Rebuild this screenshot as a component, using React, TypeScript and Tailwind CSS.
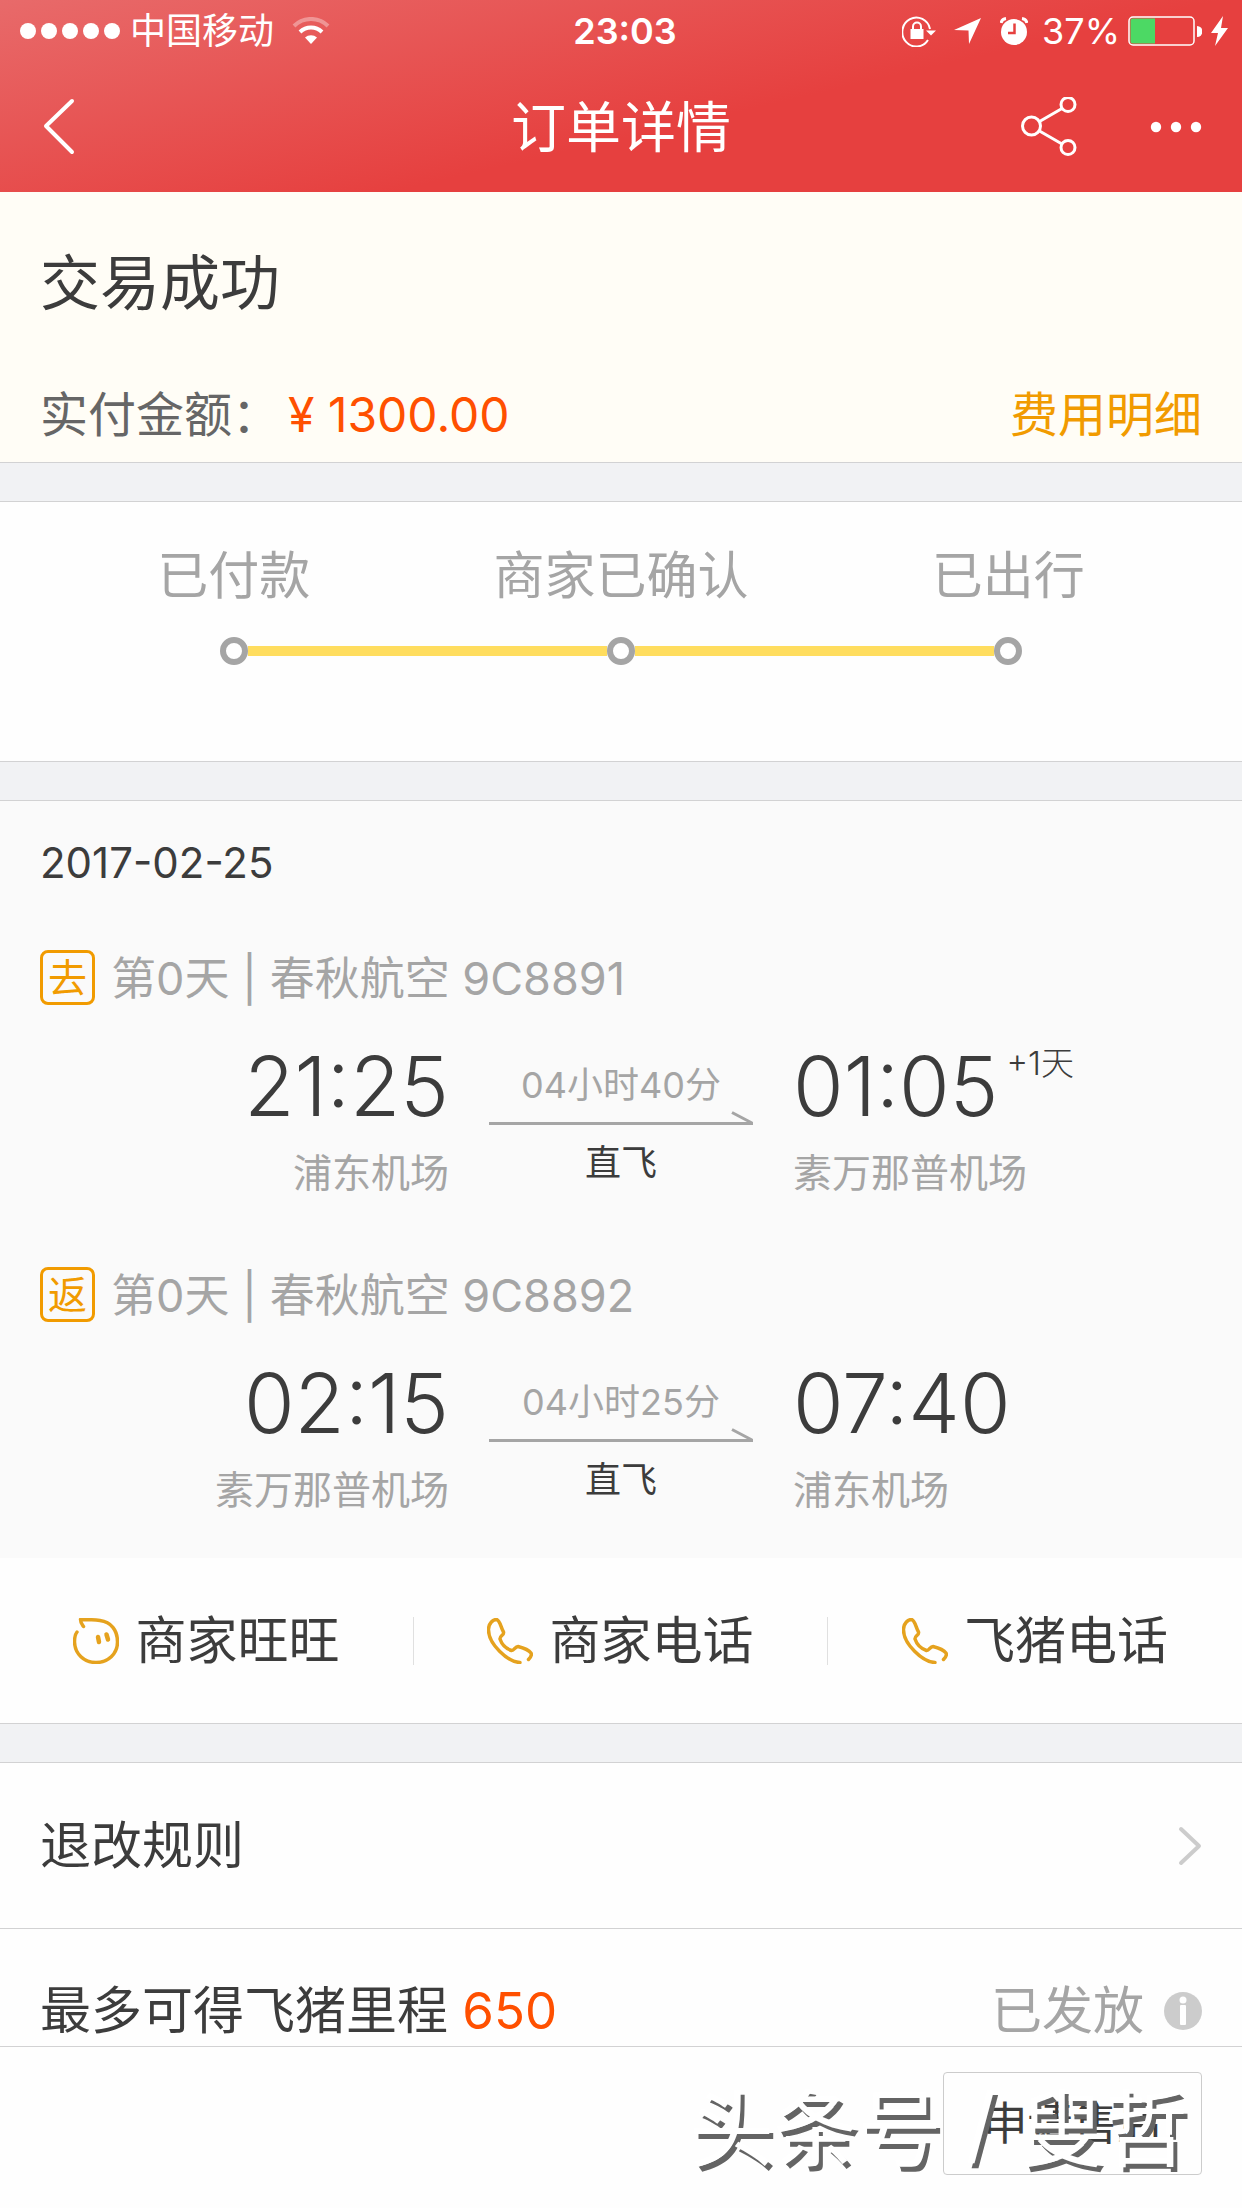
import React from "react";

//interfaces for the order data
interface Leg {
    id: number;
    tag: string;
    title: string;
    departTime: string;
    departAirport: string;
    duration: string;
    arriveTime: string;
    arriveAirport: string;
    extraDay?: string;
}

interface Contact {
    label: string;
    icon: "face" | "phone";
}

const steps = ["已付款", "商家已确认", "已出行"];

const legs: Leg[] = [
    {
        id: 1,
        tag: "去",
        title: "第0天 | 春秋航空 9C8891",
        departTime: "21:25",
        departAirport: "浦东机场",
        duration: "04小时40分",
        arriveTime: "01:05",
        arriveAirport: "素万那普机场",
        extraDay: "+1天",
    },
    {
        id: 2,
        tag: "返",
        title: "第0天 | 春秋航空 9C8892",
        departTime: "02:15",
        departAirport: "素万那普机场",
        duration: "04小时25分",
        arriveTime: "07:40",
        arriveAirport: "浦东机场",
    },
];

const contacts: Contact[] = [
    { label: "商家旺旺", icon: "face" },
    { label: "商家电话", icon: "phone" },
    { label: "飞猪电话", icon: "phone" },
];

function StatusBar() {
    return (
        <div className="relative flex items-center justify-between h-[62px] pl-5 pr-[14px] text-[36px] leading-[48px]">
            <div className="flex items-center">
                <div className="flex gap-[5px] mr-[10px]">
                    {[1, 2, 3, 4, 5].map((dot) => (
                        <span key={dot} className="w-4 h-4 rounded-full bg-white"></span>
                    ))}
                </div>
                <span>中国移动</span>
                <svg className="ml-[18px]" width="38" height="28" viewBox="0 0 38 28" fill="none" stroke="white">
                    <path d="M2 9 A24 24 0 0 1 36 9" strokeWidth="4" opacity="0.35" />
                    <path d="M8 15 A16 16 0 0 1 30 15" strokeWidth="4" />
                    <path d="M19 27 L13 20.5 A9 9 0 0 1 25 20.5 Z" fill="white" stroke="none" />
                </svg>
            </div>

            {/* clock stays in the middle of the bar */}
            <span className="absolute inset-x-0 text-center font-semibold pointer-events-none pl-2">23:03</span>

            <div className="flex items-center">
                <svg width="34" height="32" viewBox="0 0 34 32" fill="none" stroke="white">
                    <path d="M28 14 A14 14.5 0 1 0 26 25" strokeWidth="2" />
                    <path d="M24 15.5 H34 L29 20.5 Z" fill="white" stroke="none" />
                    <rect x="8.500" y="14" width="13" height="10" fill="white" stroke="none" />
                    <path d="M11 15 V11.500 a4 4 0 0 1 8 0 V15" strokeWidth="2" />
                </svg>
                <svg className="ml-[18px]" width="28" height="28" viewBox="0 0 28 28" fill="white">
                    <path d="M27 1 L15 27 L14.500 13.500 L0 13 Z" />
                </svg>
                <svg className="ml-[18px]" width="28" height="28" viewBox="0 0 28 28" fill="none" stroke="white">
                    <circle cx="14" cy="15" r="13" fill="white" stroke="none" />
                    <path d="M1 6 A6 6 0 0 1 6 1.500 M27 6 A6 6 0 0 0 22 1.500" strokeWidth="3" />
                    <path d="M14.500 6.500 V16 H8" stroke="#e6403f" strokeWidth="2.500" />
                </svg>
                <span className="ml-[14px]">37%</span>
                <svg className="ml-2" width="74" height="30" viewBox="0 0 74 30">
                    <rect x="1" y="1" width="65" height="28" rx="4" fill="none" stroke="white" strokeWidth="1.500" />
                    <path d="M2.500 4.500 a2 2 0 0 1 2 -2 H27 V27.500 H4.500 a2 2 0 0 1 -2 -2 Z" fill="#4cd964" />
                    <path d="M69 10 a5 5 0 0 1 0 11 Z" fill="white" />
                </svg>
                <svg className="ml-[9px]" width="17" height="30" viewBox="0 0 17 30" fill="white">
                    <path d="M12 0 L0 17 H7 L4 30 L17 12 H10 Z" />
                </svg>
            </div>
        </div>
    );
}

function NavBar() {
    return (
        <div className="flex items-center justify-between h-[130px] px-10">
            <div className="flex-1 flex">
                <button aria-label="返回">
                    <svg width="38" height="58" viewBox="0 0 38 58" fill="none" stroke="white" strokeWidth="4" strokeLinecap="round" strokeLinejoin="round">
                        <path d="M32 3 L6 28 L32 54" />
                    </svg>
                </button>
            </div>
            <h1 className="text-[55px] leading-[72px]">订单详情</h1>
            <div className="flex-1 flex justify-end items-center gap-[73px]">
                <button aria-label="分享">
                    <svg width="56" height="60" viewBox="0 0 56 60" fill="none" stroke="white" strokeWidth="3">
                        <circle cx="10.500" cy="29" r="9" />
                        <circle cx="47" cy="7.500" r="7" />
                        <circle cx="47" cy="50.500" r="7" />
                        <path d="M18.500 24.500 L41 11.500 M18.500 34 L41 47" />
                    </svg>
                </button>
                <button aria-label="更多">
                    <svg width="52" height="12" viewBox="0 0 52 12" fill="white">
                        <circle cx="6" cy="6" r="5.200" />
                        <circle cx="26" cy="6" r="5.200" />
                        <circle cx="46" cy="6" r="5.200" />
                    </svg>
                </button>
            </div>
        </div>
    );
}

function Divider() {
    return <div className="h-10 bg-[#f1f2f4] border-y border-[#d2d2d3]"></div>;
}

function FlightLeg({ leg }: { leg: Leg }) {
    return (
        <div>
            <div className="flex items-center gap-4 text-[45px] leading-[60px] text-[#a5a5a5]">
                <span className="flex items-center justify-center w-[55px] h-[55px] border-3 border-[#f19b00] rounded-lg text-[39px] leading-[48px] text-[#f19b00]">
                    {leg.tag}
                </span>
                <span className="pt-[3px]">{leg.title}</span>
            </div>
            <div className="grid grid-cols-[1fr_264px_1fr] gap-10 mt-9">
                <div className="text-right">
                    <p className="text-[82px] leading-[84px] font-light text-[#3c3c3c]">{leg.departTime}</p>
                    <p className="mt-5 text-[39px] leading-[48px] text-[#a5a5a5]">{leg.departAirport}</p>
                </div>
                <div className="pt-4 text-center text-[36px] leading-[48px]">
                    <p className="text-[#a5a5a5]">{leg.duration}</p>
                    <svg className="block w-full mt-[2px]" height="14" viewBox="0 0 264 14" fill="none" stroke="#a5a5a5" strokeWidth="3">
                        <path d="M0 12.500 H264 M243 1.500 L263 12" />
                    </svg>
                    <p className="mt-[14px] text-[#3c3c3c]">直飞</p>
                </div>
                <div>
                    <div className="flex items-start gap-2 text-[#3c3c3c]">
                        <p className="text-[82px] leading-[84px] font-light">{leg.arriveTime}</p>
                        {leg.extraDay && <span className="text-[33px] leading-[36px] font-light">{leg.extraDay}</span>}
                    </div>
                    <p className="mt-5 text-[39px] leading-[48px] text-[#a5a5a5]">{leg.arriveAirport}</p>
                </div>
            </div>
        </div>
    );
}

function ContactIcon({ icon }: { icon: "face" | "phone" }) {
    return (
        <svg width="46" height="46" viewBox="0 0 46 46" fill="none" stroke="#e5a21e" strokeWidth="3.500" strokeLinecap="round" strokeLinejoin="round">
            {icon === "face" ? (
                <>
                    <path d="M4 14 C1.500 17 1.500 21 1.500 24 C2 36 11 44.500 23 44.500 C35 44.500 44.500 36 44.500 24 C44.500 12 38 4 27 2.500 C20 1.500 14 1.500 7.500 1.500 C7.500 5 9 6.500 10.500 8.500" />
                    <path d="M25 19 L26 24 M33.500 16.500 L35 21.500" strokeWidth="4.500" />
                </>
            ) : (
                <path d="M33 44.500 C21 44 1 26 1.500 11 C2 5 6 1.500 9.500 1.500 C13 2 13.500 9 16.500 14 C17.500 17 12.500 18 13 21 C15 27 20 31 24.500 32.500 C27 33 28 28.500 31 28.500 C35 29.500 41 31 44 35 C45 37 43.500 39.500 41.500 41.500" />
            )}
        </svg>
    );
}

export default function App() {
    return (
        <div className="relative flex flex-col min-h-screen bg-[#fefefe] text-[#3c3c3c] font-['Inter','Noto_Sans_CJK_SC',sans-serif]">
            <header className="text-white bg-[linear-gradient(167deg,#e86a6a_0%,#e6403f_59%)]">
                <StatusBar />
                <NavBar />
            </header>

            <main className="flex-1">
                <section className="px-10 pt-[51px] pb-[17px] bg-[#fffdf6]">
                    <h2 className="text-[60px] leading-[80px]">交易成功</h2>
                    <div className="flex items-center justify-between mt-[62px] text-[48px] leading-[60px]">
                        <p className="flex text-[#666666]">
                            实付金额：
                            <span className="ml-2 text-[#ff5000]">¥ 1300.00</span>
                        </p>
                        <a href="#fee" className="text-[#f19b00]">费用明细</a>
                    </div>
                </section>

                <Divider />

                <section className="pt-11 pb-24 px-10">
                    <ol className="grid grid-cols-3">
                        {steps.map((step, index) => (
                            <li key={step} className="flex flex-col items-center text-[51px] leading-[60px] text-[#a5a5a5]">
                                {step}
                                <div className="flex items-center w-full mt-[31px]">
                                    <span className={index > 0 ? "flex-1 h-[10px] bg-[#ffdd5e]" : "flex-1"}></span>
                                    <span className="w-7 h-7 border-6 border-[#a5a5a5] rounded-full bg-white"></span>
                                    <span className={index < steps.length - 1 ? "flex-1 h-[10px] bg-[#ffdd5e]" : "flex-1"}></span>
                                </div>
                            </li>
                        ))}
                    </ol>
                </section>

                <Divider />

                <section className="px-10 pt-8 pb-11 bg-[#fafafa]">
                    <p className="text-[42px] leading-[60px]">2017-02-25</p>
                    <div className="flex flex-col gap-[66px] mt-[53px]">
                        {legs.map((leg) => (
                            <FlightLeg key={leg.id} leg={leg} />
                        ))}
                    </div>
                </section>

                <section className="grid grid-cols-3 pt-[59px] pb-[58px] divide-x divide-[#e0e0e0]">
                    {contacts.map((contact) => (
                        <button key={contact.label} className="flex items-center justify-center gap-4 h-12 text-[51px] leading-[48px]">
                            <ContactIcon icon={contact.icon} />
                            {contact.label}
                        </button>
                    ))}
                </section>

                <Divider />

                <a href="#rules" className="flex items-center justify-between h-[166px] px-10 border-b border-[#d2d2d3] text-[51px] leading-[60px]">
                    退改规则
                    <svg width="24" height="40" viewBox="0 0 24 40" fill="none" stroke="#cccccc" strokeWidth="4" strokeLinecap="round" strokeLinejoin="round">
                        <path d="M3 3 L21 20 L3 37" />
                    </svg>
                </a>
                <div className="flex items-center justify-between px-10 pt-[52px] pb-1 text-[51px] leading-[60px]">
                    <p>
                        最多可得飞猪里程 <span className="text-[#ff5000]">650</span>
                    </p>
                    <p className="flex items-center gap-5 text-[#a5a5a5]">
                        已发放
                        <svg width="38" height="38" viewBox="0 0 38 38">
                            <circle cx="19" cy="19" r="19" fill="#cccccc" />
                            <circle cx="19" cy="8" r="3.500" fill="white" />
                            <rect x="16" y="13" width="6" height="20" rx="1" fill="white" />
                        </svg>
                    </p>
                </div>
            </main>

            <footer className="relative flex justify-end px-10 pt-[25px] pb-[33px] border-t border-[#d2d2d3]">
                <button className="w-[259px] h-[103px] border border-[#cccccc] rounded-sm text-[45px] leading-[60px]">
                    申请售后
                </button>
                {/* author mark on top of the bar */}
                <p className="absolute right-[54px] bottom-8 flex gap-6 text-[84px] leading-[104px] text-white pointer-events-none font-['Noto_Sans_CJK_SC',sans-serif] [text-shadow:4px_5px_0_#646464]">
                    <span>头条号</span>
                    <span className="font-['Inter',sans-serif]">/</span>
                    <span>叟哲</span>
                </p>
            </footer>
        </div>
    );
}
